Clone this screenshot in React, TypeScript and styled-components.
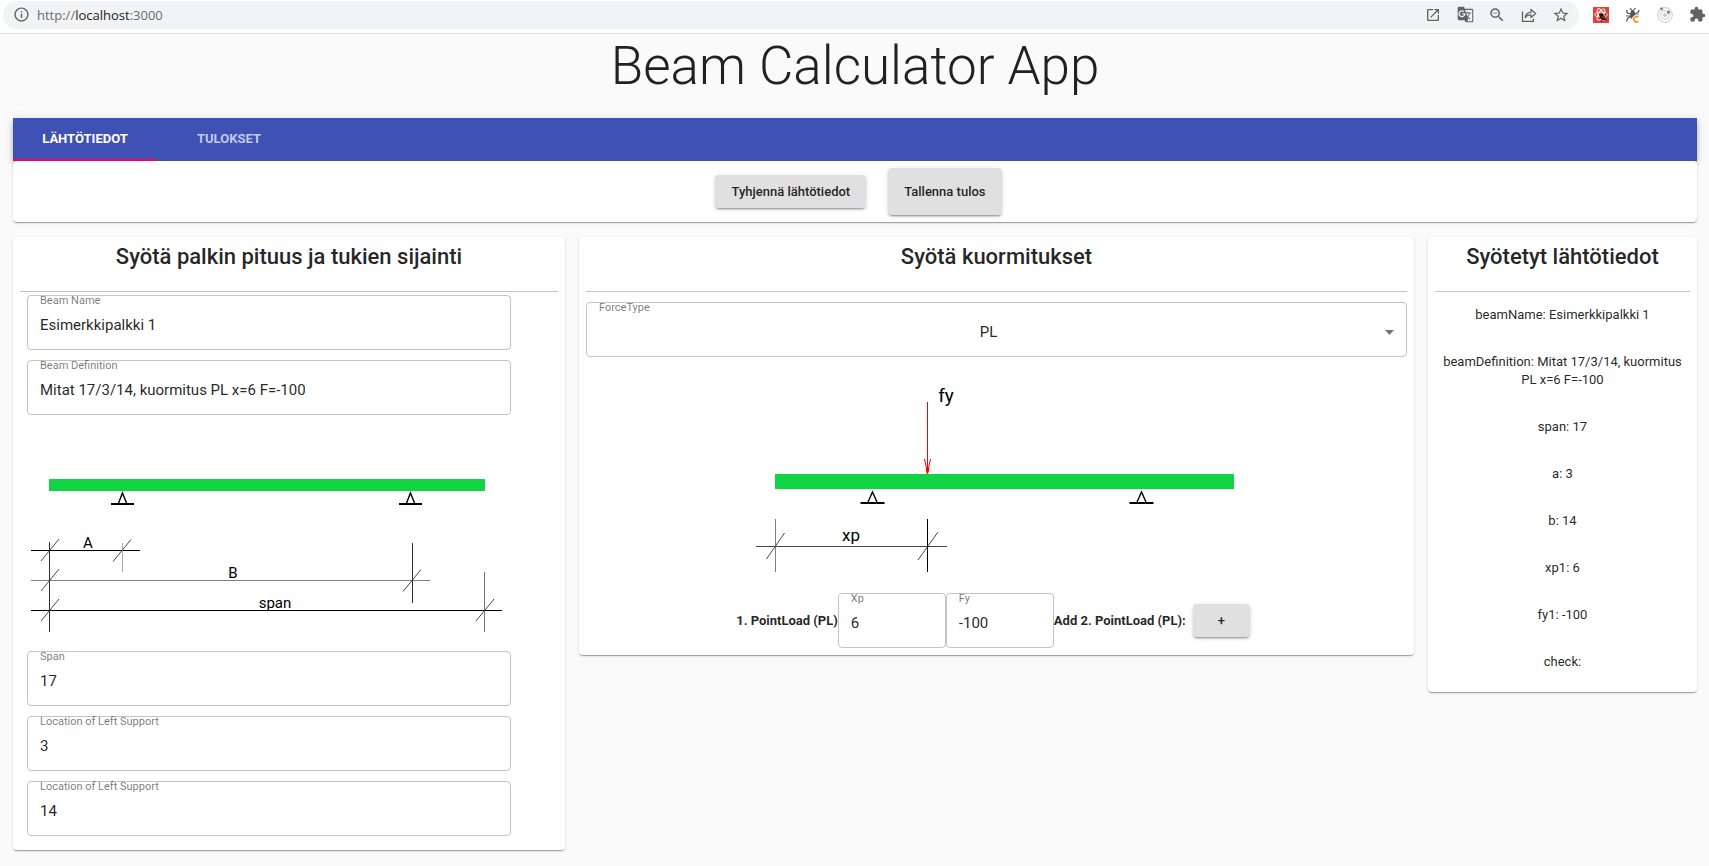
import React, { useState } from "react";
import styled, { createGlobalStyle } from "styled-components";
import {
  MdExtension,
  MdGTranslate,
  MdInfoOutline,
  MdOpenInNew,
  MdStarBorder,
  MdZoomOut,
} from "react-icons/md";

const GlobalStyle = createGlobalStyle`
  *, *::before, *::after { box-sizing: border-box; }
  body {
    margin: 0;
    background: #fafafa;
    color: rgba(0, 0, 0, 0.87);
    font-family: Roboto, "Liberation Sans", sans-serif;
    font-size: 13px;
  }
`;

const BrowserBar = styled.header`
  display: flex;
  align-items: center;
  height: 34px;
  padding: 0 4px 4px 3px;
  background: #ffffff;
  border-bottom: 1px solid #dadce0;
`;

const AddressBar = styled.div`
  display: flex;
  flex: 1;
  align-items: center;
  height: 28px;
  padding: 0 10px;
  border-radius: 14px;
  background: #f1f3f4;
  color: #5f6368;
`;

const Address = styled.div`
  flex: 1;
  margin-left: 7px;
  font: 13px/20px "Open Sans", "Noto Sans", sans-serif;
  color: #6a6e73;
`;

const Host = styled.span`
  color: #202124;
`;

const IconRow = styled.div`
  display: flex;
  align-items: center;
  gap: 16px;
`;

const Extensions = styled(IconRow)`
  margin-left: 14px;
`;

const IconButton = styled.button`
  display: flex;
  align-items: center;
  justify-content: center;
  width: 16px;
  height: 16px;
  padding: 0;
  border: 0;
  background: none;
  color: #5f6368;

  svg {
    flex: none;
  }
`;

const Title = styled.h1`
  margin: 0;
  font-size: 53px;
  font-weight: 300;
  line-height: 64px;
  text-align: center;
`;

const Page = styled.main`
  padding: 0 5px 6px 6px;
`;

const TopSection = styled.section`
  margin: 20px 7px 8px;
`;

const TabBar = styled.nav`
  display: flex;
  background: #3f51b5;
  box-shadow: 0 2px 4px -1px rgba(0, 0, 0, 0.2), 0 4px 5px 0 rgba(0, 0, 0, 0.14),
    0 1px 10px 0 rgba(0, 0, 0, 0.12);
`;

const Tab = styled.button<{ $active: boolean }>`
  width: 144px;
  height: 43px;
  padding: 0;
  border: 0;
  border-bottom: 2px solid ${(p) => (p.$active ? "#f50057" : "transparent")};
  background: none;
  color: ${(p) => (p.$active ? "#ffffff" : "rgba(255, 255, 255, 0.7)")};
  font: 700 13px/20px Roboto, sans-serif;
  text-transform: uppercase;
`;

const Paper = styled.div`
  position: relative;
  border-radius: 4px;
  background: #ffffff;
  box-shadow: 0 2px 1px -1px rgba(0, 0, 0, 0.2), 0 1px 1px 0 rgba(0, 0, 0, 0.14),
    0 1px 3px 0 rgba(0, 0, 0, 0.12);
`;

const ActionCard = styled(Paper)`
  display: flex;
  align-items: center;
  justify-content: center;
  padding: 7px;
`;

const Button = styled.button<{ $tall?: boolean }>`
  height: ${(p) => (p.$tall ? 47 : 33)}px;
  min-width: 57px;
  margin: ${(p) => (p.$tall ? "0 0 0 15px" : "0 7px")};
  padding: 0 16px;
  border: 0;
  border-radius: 4px;
  background: #e0e0e0;
  color: rgba(0, 0, 0, 0.87);
  font: 500 13px/20px Roboto, sans-serif;
  box-shadow: 0 3px 1px -2px rgba(0, 0, 0, 0.2), 0 2px 2px 0 rgba(0, 0, 0, 0.14),
    0 1px 5px 0 rgba(0, 0, 0, 0.12);
`;

const Columns = styled.div`
  display: flex;
  align-items: flex-start;
`;

const Column = styled.section<{ $span: number }>`
  flex: 0 0 calc(100% * ${(p) => p.$span} / 12);
  min-width: 0;
  padding: 7px;
`;

const Panel = styled(Paper)`
  padding: 7px;
`;

const PanelTitle = styled.h2`
  margin: 0;
  padding-bottom: 21px;
  border-bottom: 1px solid #c4c4c4;
  font-size: 22px;
  font-weight: 500;
  line-height: 26px;
  text-align: center;
`;

const FieldStack = styled.div`
  display: flex;
  flex-direction: column;
  gap: 10px;
  width: 90%;
  margin: 3px 7px 7px;
`;

const FieldBox = styled.div`
  display: flex;
  flex-direction: column;
  height: 55px;
  padding: 0 12px;
  border: 1px solid #c4c4c4;
  border-radius: 4px;
`;

const SmallFieldBox = styled(FieldBox)`
  width: 108px;
`;

const SelectBox = styled(FieldBox)`
  margin-top: 10px;
`;

const FieldLabel = styled.label`
  align-self: flex-start;
  font-size: 11px;
  line-height: 10px;
  color: rgba(0, 0, 0, 0.54);
`;

const FieldInput = styled.input`
  width: 100%;
  height: 20px;
  margin: 9px 0 0;
  padding: 0;
  border: 0;
  outline: 0;
  background: none;
  color: rgba(0, 0, 0, 0.87);
  font: 15px/20px Roboto, sans-serif;
`;

const SelectLine = styled.div`
  display: flex;
  align-items: center;
  margin-top: 9px;
`;

const Select = styled.select`
  flex: 1;
  height: 20px;
  padding: 0;
  border: 0;
  appearance: none;
  background: none;
  color: rgba(0, 0, 0, 0.87);
  font: 15px/20px Roboto, sans-serif;
  text-align: center;
  text-align-last: center;
`;

const SelectArrow = styled.svg`
  flex: none;
  margin-left: 7px;
`;

const Drawing = styled.svg`
  display: block;
  max-width: 100%;
  font-family: Roboto, sans-serif;
`;

const LoadDrawing = styled(Drawing)`
  margin: 16px auto 0;
`;

const LoadRow = styled.div`
  display: flex;
  align-items: center;
  justify-content: center;
`;

const LoadText = styled.strong`
  font-weight: 700;
  line-height: 20px;
`;

const Summary = styled.div`
  display: flex;
  flex-direction: column;
  gap: 29px;
  padding: 14px 7px;
  line-height: 18px;
  text-align: center;
`;

const SummaryLine = styled.p`
  margin: 0;
`;

const ShareIcon = () => (
  <svg width="16" height="16" viewBox="0 0 16 16" fill="none" stroke="currentColor" strokeWidth="1.3">
    <path d="M1.5 4.5v9.900h10.800v-2.600" />
    <path
      d="M4.200 10.600c.5-3.700 2.400-5.200 5.800-5.300V2.400l4.700 4.100-4.700 4.100V7.900c-2.800-.1-4.600.8-5.800 2.700z"
      strokeLinejoin="round"
    />
  </svg>
);

const ReactBugIcon = () => (
  <svg width="16" height="16" viewBox="0 0 16 16">
    <rect width="16" height="16" fill="#db4437" />
    <g fill="none" stroke="#ffffff" strokeWidth="0.9">
      <ellipse cx="8" cy="7.5" rx="6.3" ry="2.6" />
      <ellipse cx="8" cy="7.5" rx="6.3" ry="2.6" transform="rotate(60 8 7.5)" />
      <ellipse cx="8" cy="7.5" rx="6.3" ry="2.6" transform="rotate(120 8 7.5)" />
    </g>
    <ellipse cx="9.5" cy="10" rx="2.4" ry="3.6" fill="#2a1412" transform="rotate(-35 9.5 10)" />
    <path d="M6 7l2 1M6 11h2M12 8l1-1.5M12 12l2 1M9 14l-1 1" stroke="#2a1412" />
    <path d="M9 9l2 3M10.5 8.5l1 2" stroke="#db4437" strokeWidth="0.8" />
  </svg>
);

const BugIcon = () => (
  <svg width="16" height="16" viewBox="0 0 16 16">
    <path
      d="M5 1l2 2.500M10.500 1l-2 2.500M1.500 3l.8 3 4 1M14 3l-.8 2.500-4 1.500M1 9h5M1.500 14.500l1-3L6 9.500M9 8h5"
      fill="none"
      stroke="#5c5048"
      strokeWidth="1.2"
    />
    <ellipse cx="7.6" cy="7.500" rx="2.300" ry="4.500" fill="#5c5048" />
    <path d="M13.300 10.200a2.700 2.700 0 1 0 0 4" fill="none" stroke="#ffffff" strokeWidth="3.400" />
    <path d="M13.300 10.200a2.700 2.700 0 1 0 0 4" fill="none" stroke="#f7931e" strokeWidth="1.600" />
  </svg>
);

const OrbitIcon = () => (
  <svg width="16" height="16" viewBox="0 0 16 16" fill="none" stroke="#d2d2d2">
    <circle cx="8" cy="8" r="7.3" strokeWidth="1.2" />
    <circle cx="8" cy="8" r="4.3" strokeWidth="1.2" />
    <circle cx="8" cy="8" r="2" fill="#c8c8c8" stroke="none" />
    <circle cx="4.5" cy="1.8" r="1.6" fill="#8c8c8c" stroke="none" />
    <circle cx="11.5" cy="5.2" r="1.6" fill="#808080" stroke="none" />
  </svg>
);

/* Pin support: open triangle on a short ground line, apex at (x, y). */
const Support = ({ x, y, half = 4, ground = 11.5 }: { x: number; y: number; half?: number; ground?: number }) => (
  <g stroke="#000000" fill="none">
    <path d={`M${x - half} ${y + 10}L${x} ${y}L${x + half} ${y + 10}`} strokeWidth="1.4" />
    <path d={`M${x - ground} ${y + 11}h${ground * 2}`} strokeWidth="2" />
  </g>
);

/* Oblique slash marking the end of a dimension line. */
const Tick = ({ x, y, w = 9, h = 11 }: { x: number; y: number; w?: number; h?: number }) => (
  <path d={`M${x - w} ${y + h}L${x + w} ${y - h}`} stroke="#333333" strokeWidth="0.9" />
);

const SpanDrawing = () => (
  <Drawing width="484" height="216" viewBox="27 425 484 216" role="img" aria-label="Beam dimensions">
    <rect x="49" y="479" width="436" height="12" fill="#11d344" />
    <Support x={122.5} y={493} />
    <Support x={410.5} y={493} />
    <g stroke="#000000">
      <path d="M31 550.5H140M31 610.5H502" />
      <path d="M31 580.5H430" stroke="#808080" />
      <path d="M49.5 542V632M412.5 543V603" stroke="#303030" />
      <path d="M122.5 543V572" stroke="#aaaaaa" />
      <path d="M484.5 572V632" stroke="#777777" />
    </g>
    <Tick x={50} y={550} />
    <Tick x={50} y={580} />
    <Tick x={50} y={610} />
    <Tick x={122} y={550.5} />
    <Tick x={412} y={580.5} />
    <Tick x={485} y={610} />
    <g fontSize="15" textAnchor="middle">
      <text x="88" y="548">A</text>
      <text x="233" y="578">B</text>
      <text x="275" y="608">span</text>
    </g>
  </Drawing>
);

const PointLoadDrawing = () => (
  <LoadDrawing width="484" height="220" viewBox="755 373 484 220" role="img" aria-label="Point load on beam">
    <rect x="776" y="474" width="459" height="15" fill="#11d344" />
    <g stroke="#ff0000" fill="none">
      <path d="M928.5 402V474" />
      <path d="M925.5 459L928.5 473L931.5 459" />
      <path d="M927 468L928.5 474L930 468" fill="#ff0000" />
    </g>
    <Support x={873.5} y={492} half={4.5} ground={12} />
    <Support x={1142.5} y={492} half={4.5} ground={12} />
    <path d="M757 546.5H948" stroke="#444444" />
    <path d="M776.5 519V572" stroke="#808080" />
    <path d="M928.5 519V572" stroke="#000000" />
    <Tick x={776.5} y={546} h={13} />
    <Tick x={929} y={546} w={10} h={14} />
    <text x="947" y="402" fontSize="19" textAnchor="middle">fy</text>
    <text x="852" y="541" fontSize="17" textAnchor="middle">xp</text>
  </LoadDrawing>
);

type FieldProps = { id: string; label: string; value: string; small?: boolean };

const Field = ({ id, label, value, small }: FieldProps) => {
  const [text, setText] = useState(value);
  const Box = small ? SmallFieldBox : FieldBox;
  return (
    <Box>
      <FieldLabel htmlFor={id}>{label}</FieldLabel>
      <FieldInput id={id} value={text} onChange={(e) => setText(e.target.value)} />
    </Box>
  );
};

const summary = [
  "beamName: Esimerkkipalkki 1",
  "beamDefinition: Mitat 17/3/14, kuormitus PL x=6 F=-100",
  "span: 17",
  "a: 3",
  "b: 14",
  "xp1: 6",
  "fy1: -100",
  "check:",
];

const tabs = ["Lähtötiedot", "Tulokset"];

export default function App() {
  const [tab, setTab] = useState(0);
  return (
    <>
      <GlobalStyle />
      <BrowserBar>
        <AddressBar>
          <MdInfoOutline size={17} />
          <Address>
            http://<Host>localhost</Host>:3000
          </Address>
          <IconRow>
            <IconButton aria-label="Open in new window"><MdOpenInNew size={16} /></IconButton>
            <IconButton aria-label="Translate"><MdGTranslate size={17} /></IconButton>
            <IconButton aria-label="Zoom out"><MdZoomOut size={18} /></IconButton>
            <IconButton aria-label="Share"><ShareIcon /></IconButton>
            <IconButton aria-label="Bookmark"><MdStarBorder size={18} /></IconButton>
          </IconRow>
        </AddressBar>
        <Extensions>
          <IconButton aria-label="React tools"><ReactBugIcon /></IconButton>
          <IconButton aria-label="Bug finder"><BugIcon /></IconButton>
          <IconButton aria-label="Orbit"><OrbitIcon /></IconButton>
          <IconButton aria-label="Extensions"><MdExtension size={17} /></IconButton>
        </Extensions>
      </BrowserBar>
      <Page>
        <Title>Beam Calculator App</Title>
        <TopSection>
          <TabBar>
            {tabs.map((name, i) => (
              <Tab key={name} $active={i === tab} onClick={() => setTab(i)}>
                {name}
              </Tab>
            ))}
          </TabBar>
          <ActionCard>
            <Button>Tyhjennä lähtötiedot</Button>
            <Button $tall>Tallenna tulos</Button>
          </ActionCard>
        </TopSection>
        <Columns>
          <Column $span={4}>
            <Panel>
              <PanelTitle>Syötä palkin pituus ja tukien sijainti</PanelTitle>
              <FieldStack>
                <Field id="beam-name" label="Beam Name" value="Esimerkkipalkki 1" />
                <Field id="beam-definition" label="Beam Definition" value="Mitat 17/3/14, kuormitus PL x=6 F=-100" />
                <SpanDrawing />
                <Field id="span" label="Span" value="17" />
                <Field id="support-a" label="Location of Left Support" value="3" />
                <Field id="support-b" label="Location of Left Support" value="14" />
              </FieldStack>
            </Panel>
          </Column>
          <Column $span={6}>
            <Panel>
              <PanelTitle>Syötä kuormitukset</PanelTitle>
              <SelectBox>
                <FieldLabel htmlFor="force-type">ForceType</FieldLabel>
                <SelectLine>
                  <Select id="force-type" defaultValue="PL">
                    <option>PL</option>
                  </Select>
                  <SelectArrow width="9" height="5" viewBox="0 0 9 5" aria-hidden="true">
                    <path d="M0 0h9L4.500 5z" fill="#757575" />
                  </SelectArrow>
                </SelectLine>
              </SelectBox>
              <PointLoadDrawing />
              <LoadRow>
                <LoadText>1. PointLoad (PL)</LoadText>
                <Field id="xp" label="Xp" value="6" small />
                <Field id="fy" label="Fy" value="-100" small />
                <LoadText>Add 2. PointLoad (PL):</LoadText>
                <Button aria-label="Add point load">+</Button>
              </LoadRow>
            </Panel>
          </Column>
          <Column $span={2}>
            <Panel>
              <PanelTitle>Syötetyt lähtötiedot</PanelTitle>
              <Summary>
                {summary.map((line) => (
                  <SummaryLine key={line}>{line}</SummaryLine>
                ))}
              </Summary>
            </Panel>
          </Column>
        </Columns>
      </Page>
    </>
  );
}
